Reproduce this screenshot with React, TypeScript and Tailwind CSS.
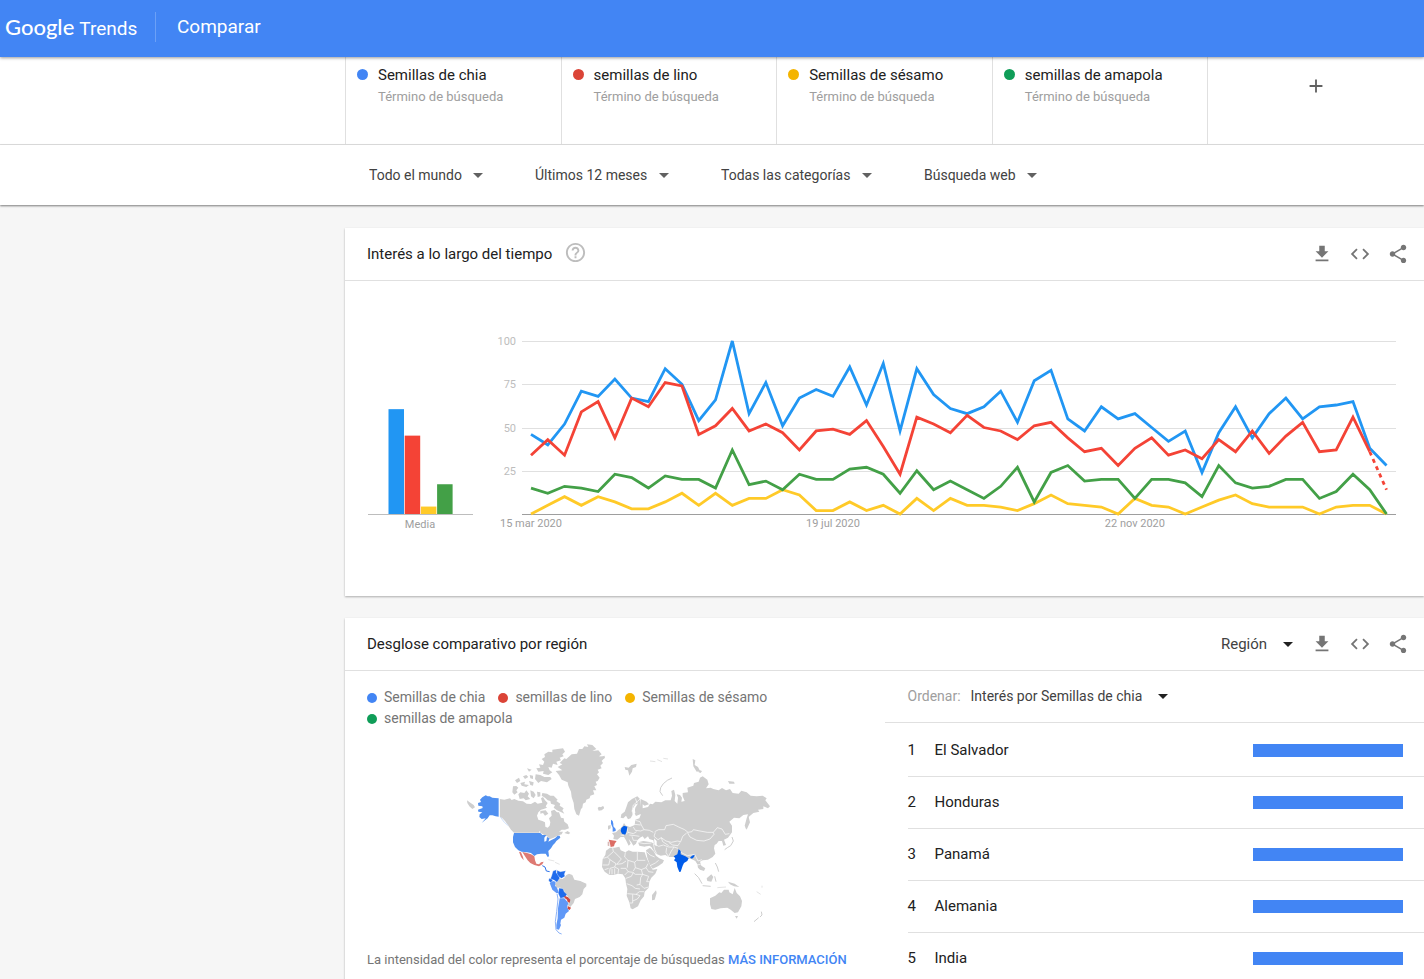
import type { ReactNode } from 'react'
import { MdAdd, MdArrowDropDown, MdCode, MdFileDownload, MdHelpOutline, MdShare } from 'react-icons/md'

const terms = [
  { name: 'Semillas de chia', dot: 'bg-[#4285f4]' },
  { name: 'semillas de lino', dot: 'bg-[#db4437]' },
  { name: 'Semillas de sésamo', dot: 'bg-[#f4b400]' },
  { name: 'semillas de amapola', dot: 'bg-[#0f9d58]' },
]

const filters = [
  { label: 'Ubicación', value: 'Todo el mundo' },
  { label: 'Período', value: 'Últimos 12 meses' },
  { label: 'Categoría', value: 'Todas las categorías' },
  { label: 'Tipo de búsqueda', value: 'Búsqueda web' },
]

const regions = [
  { name: 'El Salvador', value: 100 },
  { name: 'Honduras', value: 100 },
  { name: 'Panamá', value: 100 },
  { name: 'Alemania', value: 100 },
  { name: 'India', value: 100 },
]

const chia = [
  46, 40, 52, 71, 68, 78, 67, 65, 84, 75, 54, 66, 100, 58, 76, 51, 67, 72, 68, 85, 63, 87, 48, 84, 69, 61,
  58, 62, 71, 53, 77, 83, 55, 48, 62, 55, 58, 50, 42, 48, 24, 47, 62, 44, 58, 67, 55, 62, 63, 65, 38, 28,
]
const lino = [
  34, 43, 34, 59, 65, 44, 67, 62, 76, 74, 46, 51, 61, 48, 52, 47, 37, 48, 49, 46, 54, 39, 23, 56, 52, 47,
  57, 50, 48, 43, 51, 53, 44, 36, 38, 28, 38, 44, 34, 37, 32, 43, 36, 48, 35, 45, 53, 36, 37, 56, 36, 14,
]
const sesamo = [
  0, 5, 10, 5, 10, 7, 3, 3, 7, 12, 5, 12, 5, 9, 9, 14, 11, 2, 2, 7, 2, 5, 0, 9, 2, 9,
  5, 5, 4, 2, 6, 11, 6, 5, 4, 0, 9, 5, 4, 0, 4, 8, 11, 6, 4, 4, 4, 0, 4, 5, 5, 0,
]
const amapola = [
  15, 12, 16, 15, 13, 23, 21, 15, 22, 20, 20, 15, 37, 17, 19, 14, 23, 20, 20, 26, 27, 23, 12, 25, 14, 19,
  14, 9, 16, 27, 7, 24, 28, 19, 20, 20, 9, 20, 20, 18, 10, 28, 18, 15, 16, 20, 20, 9, 13, 23, 14, 0,
]

const averages = [
  { value: 60.6, color: '#2196f3' },
  { value: 45.3, color: '#f44336' },
  { value: 4.3, color: '#ffca28' },
  { value: 17.2, color: '#43a047' },
]

const BASELINE = 183
const chartX = (i: number) => 163 + i * 16.775
const chartY = (v: number) => BASELINE - v * 1.73

function toPoints(values: number[], from = 0) {
  return values.map((v, i) => `${chartX(i + from)},${chartY(v)}`).join(' ')
}

interface SelectProps {
  id: string
  label?: string
  value: string
  className?: string
  arrowClassName?: string
}

function Select({ id, label, value, className = '', arrowClassName = 'text-[#616161]' }: SelectProps) {
  return (
    <div className="relative inline-flex items-center">
      <select id={id} aria-label={label} className={`cursor-pointer appearance-none bg-transparent outline-none ${className}`}>
        <option>{value}</option>
      </select>
      <MdArrowDropDown className={`pointer-events-none absolute right-0 h-6 w-6 ${arrowClassName}`} />
    </div>
  )
}

function IconButton({ label, children }: { label: string; children: ReactNode }) {
  return (
    <button type="button" aria-label={label} className="cursor-pointer text-[22px] text-[#757575]">
      {children}
    </button>
  )
}

function CardActions() {
  return (
    <div className="flex items-center gap-4">
      <IconButton label="Descargar CSV">
        <MdFileDownload />
      </IconButton>
      <IconButton label="Insertar">
        <MdCode />
      </IconButton>
      <IconButton label="Compartir">
        <MdShare />
      </IconButton>
    </div>
  )
}

function TimeChart() {
  return (
    <svg viewBox="0 0 1028 200" className="h-auto w-full" role="img" aria-label="Interés a lo largo del tiempo">
      {/* Average bars */}
      {averages.map((bar, i) => (
        <rect
          key={bar.color}
          x={20.5 + i * 16.2}
          y={BASELINE - bar.value * 1.73}
          width={15.5}
          height={bar.value * 1.73}
          fill={bar.color}
        />
      ))}
      <path d="M0 183.5H105" stroke="#bdbdbd" />
      <text x="52" y="197" textAnchor="middle" fontSize="11" fill="#9e9e9e">
        Media
      </text>

      {/* Grid */}
      {[100, 75, 50, 25].map((v) => (
        <g key={v}>
          <path d={`M154 ${Math.round(chartY(v)) + 0.5}H1028`} stroke="#e0e0e0" />
          <text x="148" y={chartY(v) + 4} textAnchor="end" fontSize="11" fill="#bdbdbd">
            {v}
          </text>
        </g>
      ))}
      <path d="M154 183.5H1028" stroke="#9e9e9e" />
      {['15 mar 2020', '19 jul 2020', '22 nov 2020'].map((date, i) => (
        <text key={date} x={chartX(i * 18)} y="196" textAnchor="middle" fontSize="11" fill="#9e9e9e">
          {date}
        </text>
      ))}

      {/* Series */}
      <g fill="none" strokeWidth="2.8">
        <polyline points={toPoints(chia)} stroke="#2196f3" />
        <polyline points={toPoints(lino.slice(0, -1))} stroke="#f44336" />
        <polyline points={toPoints(lino.slice(-2), 50)} stroke="#f44336" strokeDasharray="4 4" />
        <polyline points={toPoints(sesamo)} stroke="#ffca28" />
        <polyline points={toPoints(amapola)} stroke="#43a047" />
      </g>
    </svg>
  )
}

function WorldMap() {
  return (
    <svg viewBox="0 0 975 615" className="h-auto w-[325px]" role="img" aria-label="Mapa de interés por región">
      {/* Americas */}
      <g fill="#cecece">
        <path d="M36 196L46 203 56 210 60 217 52 222 43 214 37 204ZM134 192L148 194 165 190 170 195 178 192 190 197 204 199 215 206 228 207 240 200 248 206 262 203 258 190 264 186 270 196 278 204 272 214 276 218 266 222 258 224 250 232 246 242 250 254 262 258 270 262 271 275 278 278 284 272 286 262 282 250 290 242 288 228 298 224 306 232 312 232 318 248 326 250 328 260 338 268 342 280 330 284 320 284 312 290 324 290 320 298 308 302 296 308 286 312 276 304 268 300 256 293 177 293 168 284 160 272 150 258 142 250 134 245Z" />
        <path d="M262 174L276 176 286 182 296 182 308 194 304 198 316 206 314 212 326 220 322 226 328 236 316 230 306 226 296 218 300 210 288 206 286 198 278 196 270 188 260 182ZM190 178L196 172 208 174 214 166 222 176 218 184 226 192 212 196 206 190 194 192ZM174 154L184 153 190 158 184 166 188 172 178 179 172 172ZM226 166L236 170 242 180 236 190 228 184ZM246 170L256 172 256 184 248 186ZM256 228L272 226 280 236 270 242 264 234 256 236Z" />
        <path d="M260 72L270 66 268 58 280 50 292 52 292 44 308 42 324 40 330 50 322 58 326 64 314 68 318 76 304 80 308 90 294 86 290 98 280 96 284 106 292 112 280 120 264 116 266 108 250 110 244 100 256 98 252 88 264 90 268 80ZM242 118L256 120 268 126 286 126 290 132 276 142 258 138 250 144 240 132ZM204 124L214 120 220 126 210 132ZM180 136L192 128 196 138 186 144ZM196 144L210 140 208 148 222 150 214 156 200 152ZM224 120L234 122 234 132 226 130ZM222 138L236 142 234 152 226 150ZM216 100L230 104 222 110Z" />
        <path d="M314 84L328 70 334 72 350 58 366 56 372 42 382 42 388 34 400 36 396 28 412 30 424 42 412 48 430 46 440 58 432 64 450 66 440 78 444 84 436 92 440 100 428 104 432 112 426 118 434 128 428 138 422 140 426 150 418 154 424 166 414 166 418 178 406 182 404 190 394 194 392 202 384 206 382 218 378 222 372 242 364 238 358 222 356 204 350 186 348 170 340 152 338 142 320 134 312 120 302 108 322 106 308 96 322 88Z" />
        <path d="M428 219L432 215 436 217 444 214 447 219 440 226 431 227ZM328 294L338 288 346 294 340 298Z" />
        <path d="M312 430L322 432 328 428 334 420 342 416 352 420 358 434 376 438 394 446 394 454 386 462 382 478 374 486 360 492 356 504 346 516 338 510 344 498 338 484 328 474 316 458 304 458 300 448 304 440Z" />
      </g>
      <path d="M254 288V296M133 190V247" stroke="#ffffff" strokeWidth="2" />
      <g fill="#5090f0">
        <path d="M92 181L98 184 104 184 112 188 120 189 131 190 131 245 122 244 112 241 104 241 98 250 90 256 80 264 92 250 80 252 73 246 74 238 82 232 70 230 69 224 83 219 82 214 70 212 69 204 78 201 75 194 82 187Z" />
        <path d="M177 294L256 294 262 300 274 300 268 308 268 320 274 318 276 306 284 310 280 320 288 316 300 310 308 302 314 302 316 308 304 318 300 324 294 330 288 340 280 348 282 364 278 366 272 356 258 356 246 358 238 363 228 354 216 352 200 350 190 346 180 336 174 322 174 306Z" />
      </g>
      <path d="M136 246L148 262 160 272" fill="none" stroke="#cfe0fb" strokeWidth="3" />
      <path d="M280 374L298 378M300 382L314 388" stroke="#d8d8d8" strokeWidth="2" />
      <g fill="#de7a73">
        <path d="M202 351L216 354 228 358 238 364 240 376 244 386 252 388 258 382 266 380 262 388 252 394 238 390 226 384 218 376 210 364ZM192 350L198 352 204 366 206 376 198 366Z" />
      </g>
      <path d="M262 392L270 396 274 408 284 410" fill="none" stroke="#2f74ea" strokeWidth="3" />
      <g fill="#1f6bec" stroke="#ffffff" strokeWidth="1">
        <path d="M294 408L304 404 304 414 312 418 314 430 306 442 298 436 286 432 290 422Z" />
        <path d="M306 406L316 410 332 407 328 418 330 424 320 430 312 426 306 416Z" />
        <path d="M282 430L294 434 288 443 281 438Z" />
        <path d="M312 459L324 461 328 471 336 478 330 487 316 490 310 476Z" />
      </g>
      <g fill="#6098f7">
        <path d="M284 444L294 438 302 440 300 452 306 458 312 474 304 474 292 464ZM314 490L328 490 340 504 336 516 342 528 332 536 328 548 318 554 316 566 318 570 312 584 304 582 304 570 308 550 309 520Z" />
        <path d="M306 476L309 492 305 530 301 560 303 584 312 594 320 597" fill="none" stroke="#8db3f7" strokeWidth="3" />
      </g>
      <path d="M328 482L338 486 346 494 344 503 338 501 336 494 329 489ZM338 513L348 518 344 525 338 522Z" fill="#d2483d" />

      {/* Europe, Africa, Asia and Oceania */}
      <g transform="translate(435 0)">
        <g fill="#cecece">
          <path d="M122 192L140 200 147 208 134 212 128 208 128 220 144 216 150 206 158 208 166 200 184 202 196 196 212 196 216 182 214 168 222 164 226 180 224 198 232 206 234 188 230 178 240 180 246 188 244 200 254 198 248 184 248 174 264 172 262 158 280 152 282 144 296 140 300 128 308 124 322 134 326 148 318 160 332 158 340 162 356 166 366 159 378 166 390 162 398 174 416 176 424 167 440 172 452 182 470 184 488 182 500 190 496 196 510 214 504 220 490 214 490 222 474 224 478 230 460 234 446 246 450 262 440 284 434 272 440 250 444 238 430 240 418 250 402 248 388 260 396 272 396 292 384 308 372 314 378 330 370 332 366 318 356 318 350 326 344 330 342 340 346 356 338 366 324 374 308 376 300 380 304 392 316 400 312 408 300 404 294 398 292 388 286 378 274 372 264 370 222 366 206 366 196 360 182 362 168 356 160 346 154 336 148 332 134 335 118 332 114 322 130 318 154 322 162 326 160 316 148 312 144 304 134 312 128 304 120 308 112 316 108 326 100 332 94 322 86 312 92 326 86 332 78 316 72 306 62 306 52 314 40 312 42 302 36 294 48 292 54 286 62 280 68 272 72 264 78 272 90 276 104 270 106 254 118 250 122 240 120 220Z" />
          <path d="M62 248L64 238 74 230 80 214 84 202 96 192 112 184 120 192 118 206 106 208 98 222 102 232 92 250 84 253 78 242 70 250ZM106 218L120 196 124 236 108 243 103 234ZM24 272L32 270 32 280 24 284ZM0 218L10 214 12 220 4 226Z" />
          <path d="M18 347L30 338 44 338 58 335 62 346 76 352 86 346 98 350 112 350 134 352 138 364 144 378 152 394 158 404 172 402 166 416 154 428 148 440 146 458 134 470 132 484 122 496 114 514 98 523 92 520 88 502 80 482 82 462 78 446 76 430 68 418 54 416 40 420 28 420 14 410 6 396 8 372 16 360Z" />
          <path d="M138 346L150 338 162 350 168 362 178 370 192 376 188 384 174 394 158 401 150 390 142 368ZM168 466L170 474 164 494 156 496 156 480ZM330 490L346 482 358 472 364 474 372 464 386 464 388 472 398 478 404 459 410 474 420 484 426 498 424 514 414 532 404 534 392 524 382 518 362 520 346 524 334 522 330 508ZM405 543L414 543 410 551Z" />
          <path d="M74 96L86 98 94 90 110 86 108 96 98 100 96 110 88 122 84 106 76 104ZM278 72L286 76 284 90 294 96 300 108 290 110 280 94ZM296 104L306 108 302 114 296 112ZM384 138L402 140 404 146 388 146ZM0 66L14 62 14 70 0 78ZM320 430L334 418 340 426 334 440 322 438ZM384 440L404 446 418 456 402 454 390 448Z" />
          <path
            d="M216 129L202 136 190 146 182 158 180 170 188 182M396 306L400 318 392 332 382 338 374 344M444 246L438 280M284 416L296 428 306 446M308 452L332 454M344 424L348 440M346 384L352 396 356 410M484 530L486 540 480 546M476 548L462 560"
            fill="none"
            stroke="#cecece"
            strokeWidth="3"
          />
          <path d="M150 78L166 80M172 74L186 80M190 70L204 72M352 458L378 456M470 470L482 478M486 452V458" fill="none" stroke="#e4e4e4" strokeWidth="3" />
        </g>

        {/* Inland waters */}
        <path d="M162 310L170 318 170 334 164 330ZM96 226L104 218 106 234 98 240Z" fill="#ffffff" />

        {/* Country borders */}
        <g fill="none" stroke="#ffffff" strokeWidth="2">
          <path d="M164 290L176 284 194 284 198 272 220 268 236 276 254 284 264 292 276 290 280 284 300 288 322 292 340 292 352 278 366 282 376 298 388 296M262 292L270 306 290 316 312 318 330 312 342 298 340 292M166 292L162 304 174 314 184 308 198 318 214 322 232 318 242 320 248 304 260 294M184 308L188 320 206 332M206 322L218 330 234 332 240 322M162 326L176 334 190 330 206 336 222 336 234 340M200 338L198 352 206 366M222 336L214 348 206 364M160 326L164 344 170 356M236 342L246 354 262 362 284 358 288 366 294 378 306 374" />
          <path d="M106 256L120 260 124 270 132 284 148 286 160 292M104 268L122 270M100 276L106 286 122 288 132 284M84 292L100 296 110 290M88 300L106 302 118 304M96 304L100 316 112 316M80 276L84 292 76 300M62 300L72 302M114 322L132 326 154 324M136 336L154 338M120 192L112 200 100 210 96 230M106 190L112 206" />
          <path d="M38 338L40 350 22 366 10 370M42 350L64 372 50 388M76 352L74 366 84 376 104 382M112 350V376H136M110 376L104 382 106 398 100 408M22 366L30 374 26 390 8 390M30 374L48 386 44 396 30 400 28 418M50 388L66 386 78 378M44 396L56 402 54 416M62 400L78 400 84 410 74 420M84 376L82 398M106 398L124 404 138 398 144 386M138 398L146 410 160 412M124 404L128 418 146 424M84 410L98 412 106 418 128 418M78 430L94 424 100 412M128 418L122 428 120 448 132 460 146 456M80 446L96 452 106 460 120 462M120 448L110 450M82 476L108 478 118 470 132 470M98 478V504L90 504M98 498L112 492 120 482 108 478M26 400L14 404M36 402V418M44 400V418M146 424L140 440 148 440M140 350L150 360 164 366M150 392L166 384 176 376M280 376L290 390 302 388" />
        </g>

        <path d="M64 279L72 272 82 275 80 288 76 299 66 296 62 288Z" fill="#005cea" />
        <path d="M33 254L38 258 40 266 40 274 47 282 47 288 38 290 38 278 33 266Z" fill="#4f8ef5" />
        <path d="M26 314L50 318 44 326 42 334 32 336 29 322Z" fill="#dc6d65" />
        <path d="M23 320L28 320 28 334 23 332Z" fill="#d8b9b7" />
        <path d="M236 342L242 348 242 358 256 364 266 370 262 378 252 384 248 392 242 410 238 411 232 396 230 382 222 376 226 370 221 364 232 358ZM270 368L276 362 284 359 282 366 276 371Z" fill="#005cea" />
      </g>
    </svg>
  )
}

export default function App() {
  return (
    <div className="flex h-screen flex-col overflow-hidden bg-[#f6f6f6] font-['Roboto',sans-serif] text-[#212121]">
      <header className="z-10 flex h-[57px] shrink-0 items-center bg-[#4285f4] pb-[3px] text-white shadow-[0_1px_3px_rgba(0,0,0,0.4)]">
        <a href="#" className="flex w-[155px] items-baseline gap-[5px] pl-[5px] font-['Lato',sans-serif] text-[22px]">
          <span className="font-medium">Google</span>
          <span className="font-['Roboto',sans-serif] text-[19px]">Trends</span>
        </a>
        <div className="h-[30px] border-l border-[#6ba0f7]" />
        <h1 className="ml-[21px] text-[19px]">Comparar</h1>
      </header>

      {/* Search terms */}
      <section className="shrink-0 border-b border-[#e0e0e0] bg-white pr-px pl-[345px]">
        <ul className="grid h-[87px] grid-cols-5">
          {terms.map((term) => (
            <li key={term.name} className="flex gap-[10px] border-l border-[#e0e0e0] pt-[7px] pl-[11px]">
              <span className={`mt-[5px] h-[11px] w-[11px] shrink-0 rounded-full ${term.dot}`} />
              <div>
                <p className="text-[15px] leading-[22px]">{term.name}</p>
                <p className="text-[13px] leading-[22px] text-[#9e9e9e]">Término de búsqueda</p>
              </div>
            </li>
          ))}
          <li className="flex justify-center border-l border-[#e0e0e0] pt-[18px]">
            <button type="button" aria-label="Agregar comparación" className="h-[22px] cursor-pointer text-[22px] text-[#616161]">
              <MdAdd />
            </button>
          </li>
        </ul>
      </section>

      {/* Filters */}
      <section className="z-10 flex h-[60px] shrink-0 items-center gap-[45px] bg-white pb-px pl-[369px] shadow-[0_1px_2px_rgba(0,0,0,0.5)]">
        {filters.map((filter) => (
          <Select
            key={filter.label}
            id={filter.label}
            label={filter.label}
            value={filter.value}
            className="pr-7 text-sm text-[#424242]"
          />
        ))}
      </section>

      <main className="flex flex-col gap-[22px] pt-[23px] pl-[345px]">
        {/* Interest over time */}
        <section className="bg-white pb-[65px] shadow-[0_1px_2px_rgba(0,0,0,0.3)]">
          <div className="flex h-[53px] items-center justify-between border-b border-[#e0e0e0] pr-[15px] pl-[22px]">
            <div className="flex items-center gap-3">
              <h2 className="text-[15px]">Interés a lo largo del tiempo</h2>
              <button type="button" aria-label="Ayuda" className="cursor-pointer pb-[3px] text-[23px] text-[#bdbdbd]">
                <MdHelpOutline />
              </button>
            </div>
            <CardActions />
          </div>
          <div className="pt-[50px] pr-7 pl-[23px]">
            <TimeChart />
          </div>
        </section>

        {/* Breakdown by region */}
        <section className="bg-white shadow-[0_1px_2px_rgba(0,0,0,0.3)]">
          <div className="flex h-[53px] items-center justify-between border-b border-[#e0e0e0] pr-[15px] pl-[22px]">
            <h2 className="text-[15px]">Desglose comparativo por región</h2>
            <div className="flex items-center gap-[11px]">
              <Select
                id="resolution"
                label="Resolución"
                value="Región"
                className="pr-8 text-[15px] text-[#424242]"
                arrowClassName="text-[#212121]"
              />
              <CardActions />
            </div>
          </div>

          <div className="grid grid-cols-2">
            <div className="pl-[22px]">
              <ul className="flex max-w-[430px] flex-wrap gap-x-[13px] pt-4 text-sm leading-[21px] text-[#757575]">
                {terms.map((term) => (
                  <li key={term.name} className="flex items-center gap-[7px]">
                    <span className={`h-[10px] w-[10px] rounded-full ${term.dot}`} />
                    {term.name}
                  </li>
                ))}
              </ul>
              <div className="flex justify-center pt-[6px] pr-4">
                <WorldMap />
              </div>
              <p className="pt-[10px] text-[13px] leading-5 text-[#757575]">
                La intensidad del color representa el porcentaje de búsquedas{' '}
                <a href="#" className="font-medium text-[#4285f4]">
                  MÁS INFORMACIÓN
                </a>
              </p>
            </div>

            <div>
              <div className="flex h-[52px] items-center gap-[10px] border-b border-[#e0e0e0] pb-px pl-[23px] text-sm">
                <label htmlFor="sort" className="text-[#9e9e9e]">
                  Ordenar:
                </label>
                <Select
                  id="sort"
                  value="Interés por Semillas de chia"
                  className="pr-8 text-[#424242]"
                  arrowClassName="text-[#212121]"
                />
              </div>
              <ol className="pt-[2px] pl-[23px] text-[15px]">
                {regions.map((region, i) => (
                  <li key={region.name} className="flex h-[52px] items-center border-b border-[#e0e0e0] pr-[21px]">
                    <span className="w-[27px]">{i + 1}</span>
                    <span className="flex-1">{region.name}</span>
                    <span className="w-[150px]">
                      <span className="block h-[13px] bg-[#4285f4]" style={{ width: `${region.value}%` }} />
                    </span>
                  </li>
                ))}
              </ol>
            </div>
          </div>
        </section>
      </main>
    </div>
  )
}
